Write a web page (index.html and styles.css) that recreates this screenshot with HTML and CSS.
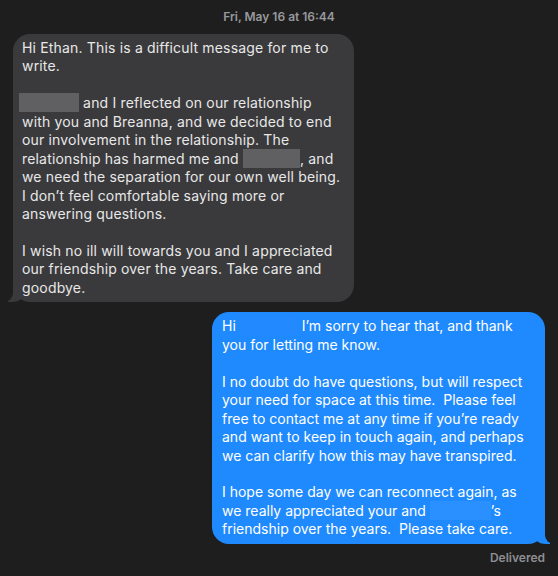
FILE: index.html
```html
<!DOCTYPE html>
<html>
<head>
<meta charset="utf-8">
<link rel="stylesheet" href="styles.css">
</head>
<body>
<div class="chat">
  <div class="time">Fri, May 16 at 16:44</div>
  <div class="msg them">
    Hi Ethan. This is a difficult message for me to<br>
    write.<br>
    <br>
    <span class="redact first"></span> and I reflected on our relationship<br>
    with you and Breanna, and we decided to end<br>
    our involvement in the relationship. The<br>
    relationship has harmed me and <span class="redact r2"></span>, and<br>
    we need the separation for our own well being.<br>
    I don’t feel comfortable saying more or<br>
    answering questions.<br>
    <br>
    I wish no ill will towards you and I appreciated<br>
    our friendship over the years. Take care and<br>
    goodbye.
  </div>
  <div class="msg me">
    Hi <span class="redact b1"></span> I’m sorry to hear that, and thank<br>
    you for letting me know.<br>
    <br>
    I no doubt do have questions, but will respect<br>
    your need for space at this time.&nbsp; Please feel<br>
    free to contact me at any time if you’re ready<br>
    and want to keep in touch again, and perhaps<br>
    we can clarify how this may have transpired.<br>
    <br>
    I hope some day we can reconnect again, as<br>
    we really appreciated your and <span class="redact b2"></span>’s<br>
    friendship over the years.&nbsp; Please take care.
  </div>
  <div class="status">Delivered</div>
</div>
</body>
</html>
```
FILE: styles.css
```css
html, body {
  margin: 0;
  padding: 0;
  background: #1e1e1e;
}
body {
  font-family: "Inter", "Liberation Sans", sans-serif;
  -webkit-font-smoothing: antialiased;
}
.chat {
  display: flex;
  flex-direction: column;
  padding: 9px 13px 0;
}
.time {
  align-self: center;
  font-size: 12px;
  line-height: 16px;
  font-weight: 600;
  color: #98989d;
  margin-bottom: 9px;
}
.msg {
  position: relative;
  z-index: 0;
  box-sizing: border-box;
  font-size: 14px;
  line-height: 18.46px;
  white-space: nowrap;
  border-radius: 17px;
}
.them {
  align-self: flex-start;
  width: 341px;
  padding: 5px 9px;
  background: #3a3a3c;
  color: #e8e8e8;
  letter-spacing: 0.17px;
}
.me {
  align-self: flex-end;
  width: 333px;
  padding: 5px 10px;
  margin-top: 10px;
  background: #1f8afe;
  color: #ffffff;
}
.msg::before,
.msg::after {
  content: "";
  position: absolute;
  bottom: 0;
  z-index: -1;
  height: 16px;
}
.them::before {
  left: -5px;
  width: 18px;
  background: #3a3a3c;
  border-bottom-right-radius: 14px 12px;
}
.them::after {
  left: -22px;
  width: 22px;
  background: #1e1e1e;
  border-bottom-right-radius: 9px;
}
.me::before {
  right: -5px;
  width: 18px;
  background: #1f8afe;
  border-bottom-left-radius: 14px 12px;
}
.me::after {
  right: -22px;
  width: 22px;
  background: #1e1e1e;
  border-bottom-left-radius: 9px;
}
.redact {
  display: inline-block;
  height: 19px;
  vertical-align: top;
  margin-top: -1px;
}
.first {
  width: 60px;
  margin-left: -3px;
  background: #606062;
}
.r2 {
  width: 57px;
  background: #606062;
}
.b1 {
  width: 58px;
  background: #2289fe;
}
.b2 {
  width: 61px;
  background: #2b90ff;
}
.status {
  align-self: flex-end;
  margin-top: 7px;
  font-size: 12px;
  line-height: 14px;
  font-weight: 600;
  color: #8e8e93;
}
```
